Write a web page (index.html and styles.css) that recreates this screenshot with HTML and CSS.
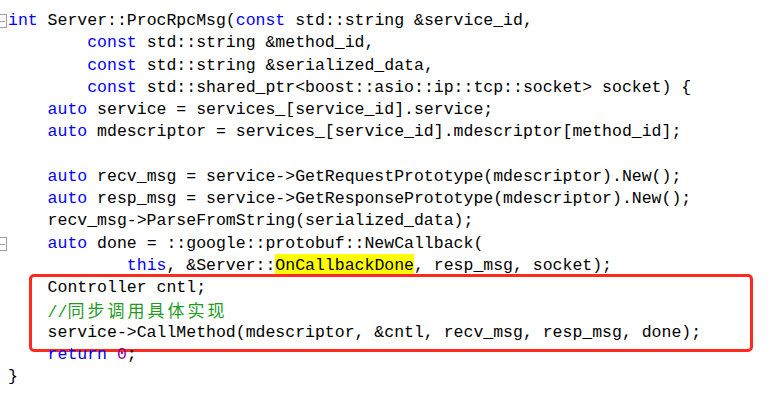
FILE: index.html
```html
<!DOCTYPE html>
<html lang="zh">
<head>
  <meta charset="UTF-8" />
  <link rel="stylesheet" href="styles.css">
  <title>ProcRpcMsg</title>
</head>
<body>
  <div class="editor">
    <div class="line"><span class="fold"></span><span class="kw">int</span> Server::ProcRpcMsg(<span class="kw">const</span> std::string &amp;service_id,</div>
    <div class="line">        <span class="kw">const</span> std::string &amp;method_id,</div>
    <div class="line">        <span class="kw">const</span> std::string &amp;serialized_data,</div>
    <div class="line">        <span class="kw">const</span> std::shared_ptr&lt;boost::asio::ip::tcp::socket&gt; socket) {</div>
    <div class="line">    <span class="kw">auto</span> service = services_[service_id].service;</div>
    <div class="line">    <span class="kw">auto</span> mdescriptor = services_[service_id].mdescriptor[method_id];</div>
    <div class="line"> </div>
    <div class="line">    <span class="kw">auto</span> recv_msg = service-&gt;GetRequestPrototype(mdescriptor).New();</div>
    <div class="line">    <span class="kw">auto</span> resp_msg = service-&gt;GetResponsePrototype(mdescriptor).New();</div>
    <div class="line">    recv_msg-&gt;ParseFromString(serialized_data);</div>
    <div class="line"><span class="fold"></span>    <span class="kw">auto</span> done = ::google::protobuf::NewCallback(</div>
    <div class="line">            <span class="kw">this</span>, &amp;Server::<span class="mark">OnCallbackDone</span>, resp_msg, socket);</div>

    <!-- 标注框 -->
    <div class="boxed">
      <div class="line">    Controller cntl;</div>
      <div class="line">    <span class="comment">//<span class="cjk">同步调用具体实现</span></span></div>
      <div class="line">    service-&gt;CallMethod(mdescriptor, &amp;cntl, recv_msg, resp_msg, done);</div>
    </div>

    <div class="line">    <span class="kw">return</span> <span class="num">0</span>;</div>
    <div class="line">}</div>
  </div>
</body>
</html>
```

FILE: styles.css
```css
* {
  box-sizing: border-box;
}

html, body {
  margin: 0;
  padding: 0;
  height: 100%;
  overflow: hidden;
  background: #ffffff;
}

:root {
  --text-color: #000000;
  --keyword: #0000ff;
  --comment: #1f9a1f;
  --number: #8b008b;
  --box-red: #ff2a1e;
}

.editor {
  padding: 10px 0 0 8px;
  font-family: 'Liberation Mono', 'Noto Sans CJK SC', monospace;
  font-size: 16.5px;
  color: var(--text-color);
}

.line {
  position: relative;
  height: 22.25px;
  line-height: 22.25px;
  white-space: pre;
}

.kw {
  color: var(--keyword);
}

.comment {
  color: var(--comment);
}

.cjk {
  font-family: 'Noto Sans CJK SC', sans-serif;
  font-size: 17px;
  letter-spacing: 3px;
}

.num {
  color: var(--number);
}

.mark {
  background: #ffff00;
  padding: 2px 0;
}

/* fold marker in the gutter */
.fold {
  position: absolute;
  left: -11px;
  top: 4px;
  width: 10px;
  height: 14px;
  border: 1px solid #a0a0a0;
}

.fold::after {
  content: '';
  position: absolute;
  left: 1px;
  right: 1px;
  top: 6px;
  height: 1px;
  background: #a0a0a0;
}

.boxed {
  position: relative;
}

.boxed::before {
  content: '';
  position: absolute;
  left: 21px;
  top: -3px;
  width: 718px;
  bottom: -8px;
  border: 3.5px solid var(--box-red);
  border-radius: 5px;
  pointer-events: none;
}
```
